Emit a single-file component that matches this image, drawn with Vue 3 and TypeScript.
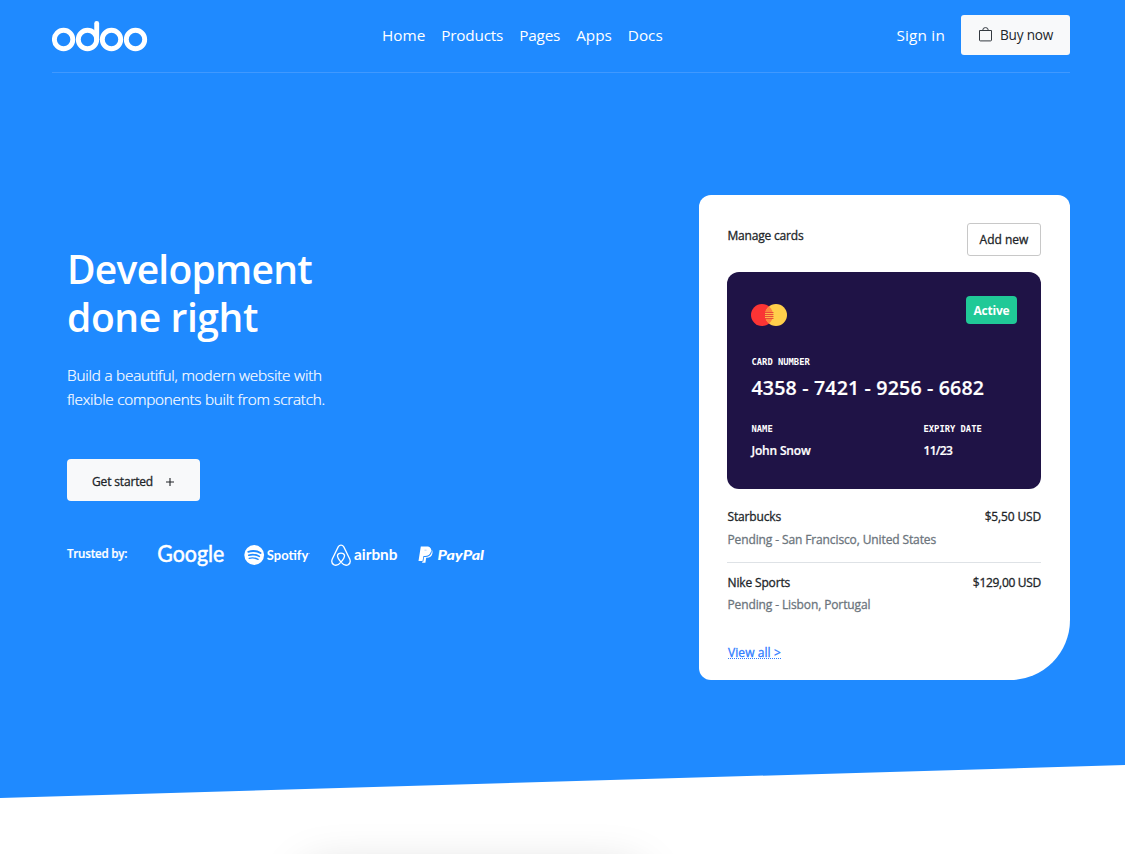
<script setup lang="ts">
interface Transaction {
  merchant: string
  amount: string
  status: string
}

const links = ['Home', 'Products', 'Pages', 'Apps', 'Docs']

const transactions: Transaction[] = [
  { merchant: 'Starbucks', amount: '$5,50 USD', status: 'Pending - San Francisco, United States' },
  { merchant: 'Nike Sports', amount: '$129,00 USD', status: 'Pending - Lisbon, Portugal' },
]
</script>

<template>
  <div class="page">
    <section class="hero">
      <header class="navbar">
        <a class="brand" aria-label="odoo">
          <svg width="96" height="32" viewBox="0 0 96 32" fill="none" stroke="#fff" stroke-width="4.9" stroke-linecap="round">
            <circle cx="11.6" cy="19.5" r="9.2" />
            <circle cx="35.5" cy="19.5" r="9.2" />
            <path d="M44.7 3.4V19.5" />
            <circle cx="59.5" cy="19.5" r="9.2" />
            <circle cx="83.5" cy="19.5" r="9.2" />
          </svg>
        </a>
        <nav class="menu">
          <a v-for="link in links" :key="link" :class="link.toLowerCase()">{{ link }}</a>
        </nav>
        <div class="actions">
          <a class="signin">Sign in</a>
          <a class="buy">
            <svg width="14" height="15" viewBox="0 0 14 15" fill="none" stroke="#343a40" stroke-width="1">
              <path d="M.5 3.500H12.500V13a.9.9 0 0 1-.9.9H1.400A.9.9 0 0 1 .5 13Z" />
              <path d="M3.800 3.500V3a2.700 2.400 0 0 1 5.400 0V3.500" />
            </svg>
            <span>Buy now</span>
          </a>
        </div>
      </header>

      <div class="content">
        <div class="intro">
          <h1><span>Development</span><br /><span class="second">done right</span></h1>
          <p class="lead">Build a beautiful, modern website with<br /><span>flexible components built from scratch.</span></p>
          <a class="start">
            <span>Get started</span>
            <svg width="8" height="8" viewBox="0 0 8 8" stroke="#212529" stroke-width="1.1"><path d="M4 0V8M0 4H8" /></svg>
          </a>
          <div class="trusted">
            <span class="label">Trusted by:</span>
            <svg class="google" width="70" height="36" viewBox="0 -5 70 36">
              <text x="-0.700" y="19.500" font-size="22.500" textLength="67" lengthAdjust="spacingAndGlyphs">Google</text>
            </svg>
            <svg class="spotify" width="68" height="26" viewBox="0 0 68 26">
              <circle cx="10.2" cy="13" r="9.9" fill="#fff" />
              <g fill="none" stroke="#1f8aff" stroke-linecap="round">
                <path d="M4.3 9.8c4-1.2 8.600-.8 12.200 1.200" stroke-width="1.9" />
                <path d="M4.800 13.200c3.600-1 7.400-.6 10.500 1.200" stroke-width="1.600" />
                <path d="M5.200 16.300c3-.7 6.200-.4 8.900 1.100" stroke-width="1.300" />
              </g>
              <text x="22.800" y="17.800" font-size="13.500" font-weight="700" textLength="41.500" lengthAdjust="spacingAndGlyphs">Spotify</text>
              <circle cx="65.300" cy="11.500" r=".5" fill="#fff" opacity=".6" />
            </svg>
            <svg class="airbnb" width="68" height="26" viewBox="0 0 68 26">
              <path d="M10 20.100C7.300 16.800 6.200 14.900 6.500 13.300c.6-3 6.400-3 7 0 .3 1.600-.8 3.500-3.500 6.800-2.500 3-5.200 3.700-7.300 2.500C.6 21.300.4 19.200 1.300 17L7.200 4.900c1.400-2.400 4.200-2.400 5.600 0l5.900 12.100c.9 2.200.7 4.300-1.400 5.600-2.100 1.200-4.800.5-7.300-2.500Z" fill="none" stroke="#fff" stroke-width="1.300" />
              <text x="23" y="18" font-size="16" font-weight="700" textLength="43.500" lengthAdjust="spacingAndGlyphs">airbnb</text>
            </svg>
            <svg class="paypal" width="68" height="26" viewBox="0 0 68 26">
              <path d="M2.800 4.500H8.500c3.700 0 5.200 2 4.500 5-.8 3.200-2.900 4.600-6 4.600H5.500L4.600 19H.5Z" fill="#fff" />
              <path d="M13.500 7.500c1 .9 1.200 2.500.9 3.900-.7 3.100-2.600 4.300-5.500 4.300H8.200L7.400 20.800H4.100L4.300 19.600H5.200L6 14.900H7.500c3.500 0 5.500-1.900 6.200-5.200Z" fill="#fff" />
              <path d="M5 19.400 5.800 14.500H7.500c3.500 0 5.400-1.700 6-4.900" fill="none" stroke="#1f8aff" stroke-width=".4" opacity=".8" />
              <path d="M6.500 8.200H8.500" stroke="#1f8aff" stroke-width=".8" opacity=".45" />
              <text x="19.500" y="18" font-size="14" font-weight="900" font-style="italic" textLength="46.500" lengthAdjust="spacingAndGlyphs">PayPal</text>
            </svg>
          </div>
        </div>

        <aside class="panel">
          <div class="panel-head">
            <span class="title">Manage cards</span>
            <a class="add">Add new</a>
          </div>
          <div class="card">
            <div class="card-top">
              <svg class="mastercard" width="36" height="22" viewBox="0 0 36 22">
                <circle cx="11" cy="11" r="11" fill="#fb3434" />
                <circle cx="25" cy="11" r="11" fill="#ffcf4b" />
                <path d="M18 2.500a11 11 0 0 1 0 17 11 11 0 0 1 0-17Z" fill="#fb8540" />
                <path d="M14 8.500H22.500M13.500 10.500H22.500M13.500 12.500H22.500M14 14.500H22.500" stroke="#e8433a" stroke-width=".9" />
                <path d="M14 9.500H22.500M14 11.500H22.500M14 13.500H22.500" stroke="#ffc04a" stroke-width=".8" />
              </svg>
              <span class="badge">Active</span>
            </div>
            <div class="caption">CARD NUMBER</div>
            <div class="number">4358 - 7421 - 9256 - 6682</div>
            <div class="details">
              <div class="holder">
                <div class="caption">NAME</div>
                <div class="value">John Snow</div>
              </div>
              <div>
                <div class="caption">EXPIRY DATE</div>
                <div class="value date">11/23</div>
              </div>
            </div>
          </div>
          <ul class="list">
            <li v-for="item in transactions" :key="item.merchant">
              <div class="row">
                <span>{{ item.merchant }}</span>
                <span class="amount">{{ item.amount }}</span>
              </div>
              <div class="status">{{ item.status }}</div>
            </li>
          </ul>
          <a class="view">View all &gt;</a>
        </aside>
      </div>
    </section>
    <section class="next"><div class="preview"></div></section>
  </div>
</template>

<style>
body {
  margin: 0;
  overflow: hidden;
}
</style>

<style scoped>
.page {
  height: 854px;
  overflow: hidden;
  background: #fff;
  color: #212529;
  font-family: 'Open Sans', 'Noto Sans', sans-serif;
  font-size: 12px;
}
.hero {
  box-sizing: border-box;
  height: 798px;
  padding: 0 55px 0 52px;
  background: #1f8aff;
  clip-path: polygon(0 0, 100% 0, 100% 765px, 0 798px);
}
.navbar {
  display: grid;
  grid-template-columns: 330px 1fr auto;
  align-items: center;
  height: 40px;
  padding: 15px 0 17px;
  border-bottom: 1px solid #4099ff;
  color: #fff;
  font-size: 15.3px;
  line-height: 24px;
}
.brand svg {
  display: block;
  margin-top: 1px;
}
.menu {
  display: flex;
  gap: 16px;
}
.products,
.pages {
  letter-spacing: -0.19px;
}
.actions {
  display: flex;
  align-items: center;
  gap: 16px;
}
.signin {
  letter-spacing: 0.2px;
}
.buy {
  display: flex;
  align-items: center;
  box-sizing: border-box;
  width: 109px;
  height: 40px;
  padding-left: 18px;
  border-radius: 3px;
  background: #f8f9fa;
  color: #212529;
  font-size: 13.6px;
  letter-spacing: -0.2px;
}
.buy svg {
  margin: -1px 7px 0 0;
}
.content {
  display: flex;
  justify-content: space-between;
}
.intro {
  padding: 172px 0 0 15px;
  color: #fff;
}
h1 {
  margin: 0;
  font-size: 39px;
  font-weight: 600;
  line-height: 48px;
  letter-spacing: -0.75px;
}
h1 .second {
  letter-spacing: -0.4px;
}
.lead {
  margin: 22px 0 0;
  font-size: 15.3px;
  font-weight: 300;
  line-height: 24px;
  letter-spacing: -0.2px;
  -webkit-text-stroke: 0.2px currentColor;
}
.lead span {
  letter-spacing: -0.25px;
}
.start {
  display: flex;
  align-items: center;
  box-sizing: border-box;
  width: 133px;
  height: 42px;
  margin-top: 48px;
  padding: 3px 0 0 25px;
  border-radius: 4px;
  background: #f8f9fa;
  color: #212529;
  letter-spacing: -0.16px;
  -webkit-text-stroke: 0.3px currentColor;
}
.start svg {
  margin-left: 13px;
}
.trusted {
  display: flex;
  align-items: center;
  height: 26px;
  margin-top: 41px;
}
.trusted .label {
  width: 91px;
  margin-top: -4px;
  font-size: 11.6px;
  font-weight: 600;
  letter-spacing: -0.22px;
  -webkit-text-stroke: 0.2px currentColor;
}
.trusted text {
  fill: #fff;
  font-family: Lato, sans-serif;
}
.google {
  margin-right: 16px;
  overflow: visible;
}
.google text {
  stroke: #fff;
  stroke-width: 0.5px;
}
.spotify,
.airbnb {
  margin-right: 19px;
}
.panel {
  box-sizing: border-box;
  width: 371px;
  height: 485px;
  margin-top: 122px;
  padding: 28px 29px 0 28px;
  border-radius: 12px 12px 60px 12px;
  background: #fff;
  -webkit-text-stroke: 0.3px currentColor;
}
.panel-head {
  display: flex;
  justify-content: space-between;
}
.title {
  margin-left: 0.5px;
  line-height: 25px;
  letter-spacing: -0.19px;
}
.add {
  box-sizing: border-box;
  width: 74px;
  height: 33px;
  border: 1px solid #c8c8c8;
  border-radius: 3px;
  line-height: 32px;
  text-align: center;
}
.card {
  box-sizing: border-box;
  height: 217px;
  margin-top: 16px;
  padding: 24px 24px 0;
  border-radius: 12px;
  background: #1f1346;
  color: #fff;
  -webkit-text-stroke: 0;
}
.card-top {
  display: flex;
  justify-content: space-between;
  align-items: flex-start;
}
.mastercard {
  margin-top: 8px;
}
.badge {
  width: 51px;
  height: 28px;
  border-radius: 4px;
  background: #20c997;
  font-weight: 700;
  line-height: 29px;
  letter-spacing: -0.2px;
  text-align: center;
}
.caption {
  margin-left: 0.5px;
  font-family: 'DejaVu Sans Mono', monospace;
  font-size: 8.8px;
  font-weight: 700;
  line-height: 12px;
}
.card > .caption {
  margin-top: 30px;
}
.number {
  height: 30px;
  margin: 5px 0 0 0.5px;
  font-size: 19.6px;
  font-weight: 600;
  line-height: 30px;
  letter-spacing: 0.16px;
  -webkit-text-stroke: 0.2px currentColor;
}
.details {
  display: flex;
  margin-top: 20px;
}
.holder {
  width: 172px;
}
.value {
  margin: 6px 0 0 0.5px;
  font-weight: 600;
  line-height: 20px;
  letter-spacing: -0.18px;
  -webkit-text-stroke: 0.2px currentColor;
}
.date {
  letter-spacing: -0.7px;
}
.list {
  margin: 17px 0 0;
  padding: 0;
  list-style: none;
}
.list li {
  height: 56px;
  padding-left: 0.5px;
}
.list li + li {
  padding-top: 9px;
  border-top: 1px solid #dee2e6;
}
.row {
  display: flex;
  justify-content: space-between;
  line-height: 22px;
  letter-spacing: -0.15px;
}
li + li .amount {
  letter-spacing: -0.3px;
}
.status {
  color: #6c757d;
  line-height: 23px;
  letter-spacing: -0.12px;
}
li + li .status {
  line-height: 22px;
}
.view {
  display: inline-block;
  margin: 19px 0 0 1px;
  border-bottom: 1px dotted #2f7dff;
  color: #2f7dff;
  line-height: 11px;
  letter-spacing: 0.08px;
}
.next {
  display: flex;
  padding: 56px 0 0 305px;
}
.preview {
  width: 336px;
  height: 300px;
  border-radius: 12px;
  background: #fff;
  box-shadow: 0 16px 48px rgba(0, 0, 0, 0.175);
}
</style>
